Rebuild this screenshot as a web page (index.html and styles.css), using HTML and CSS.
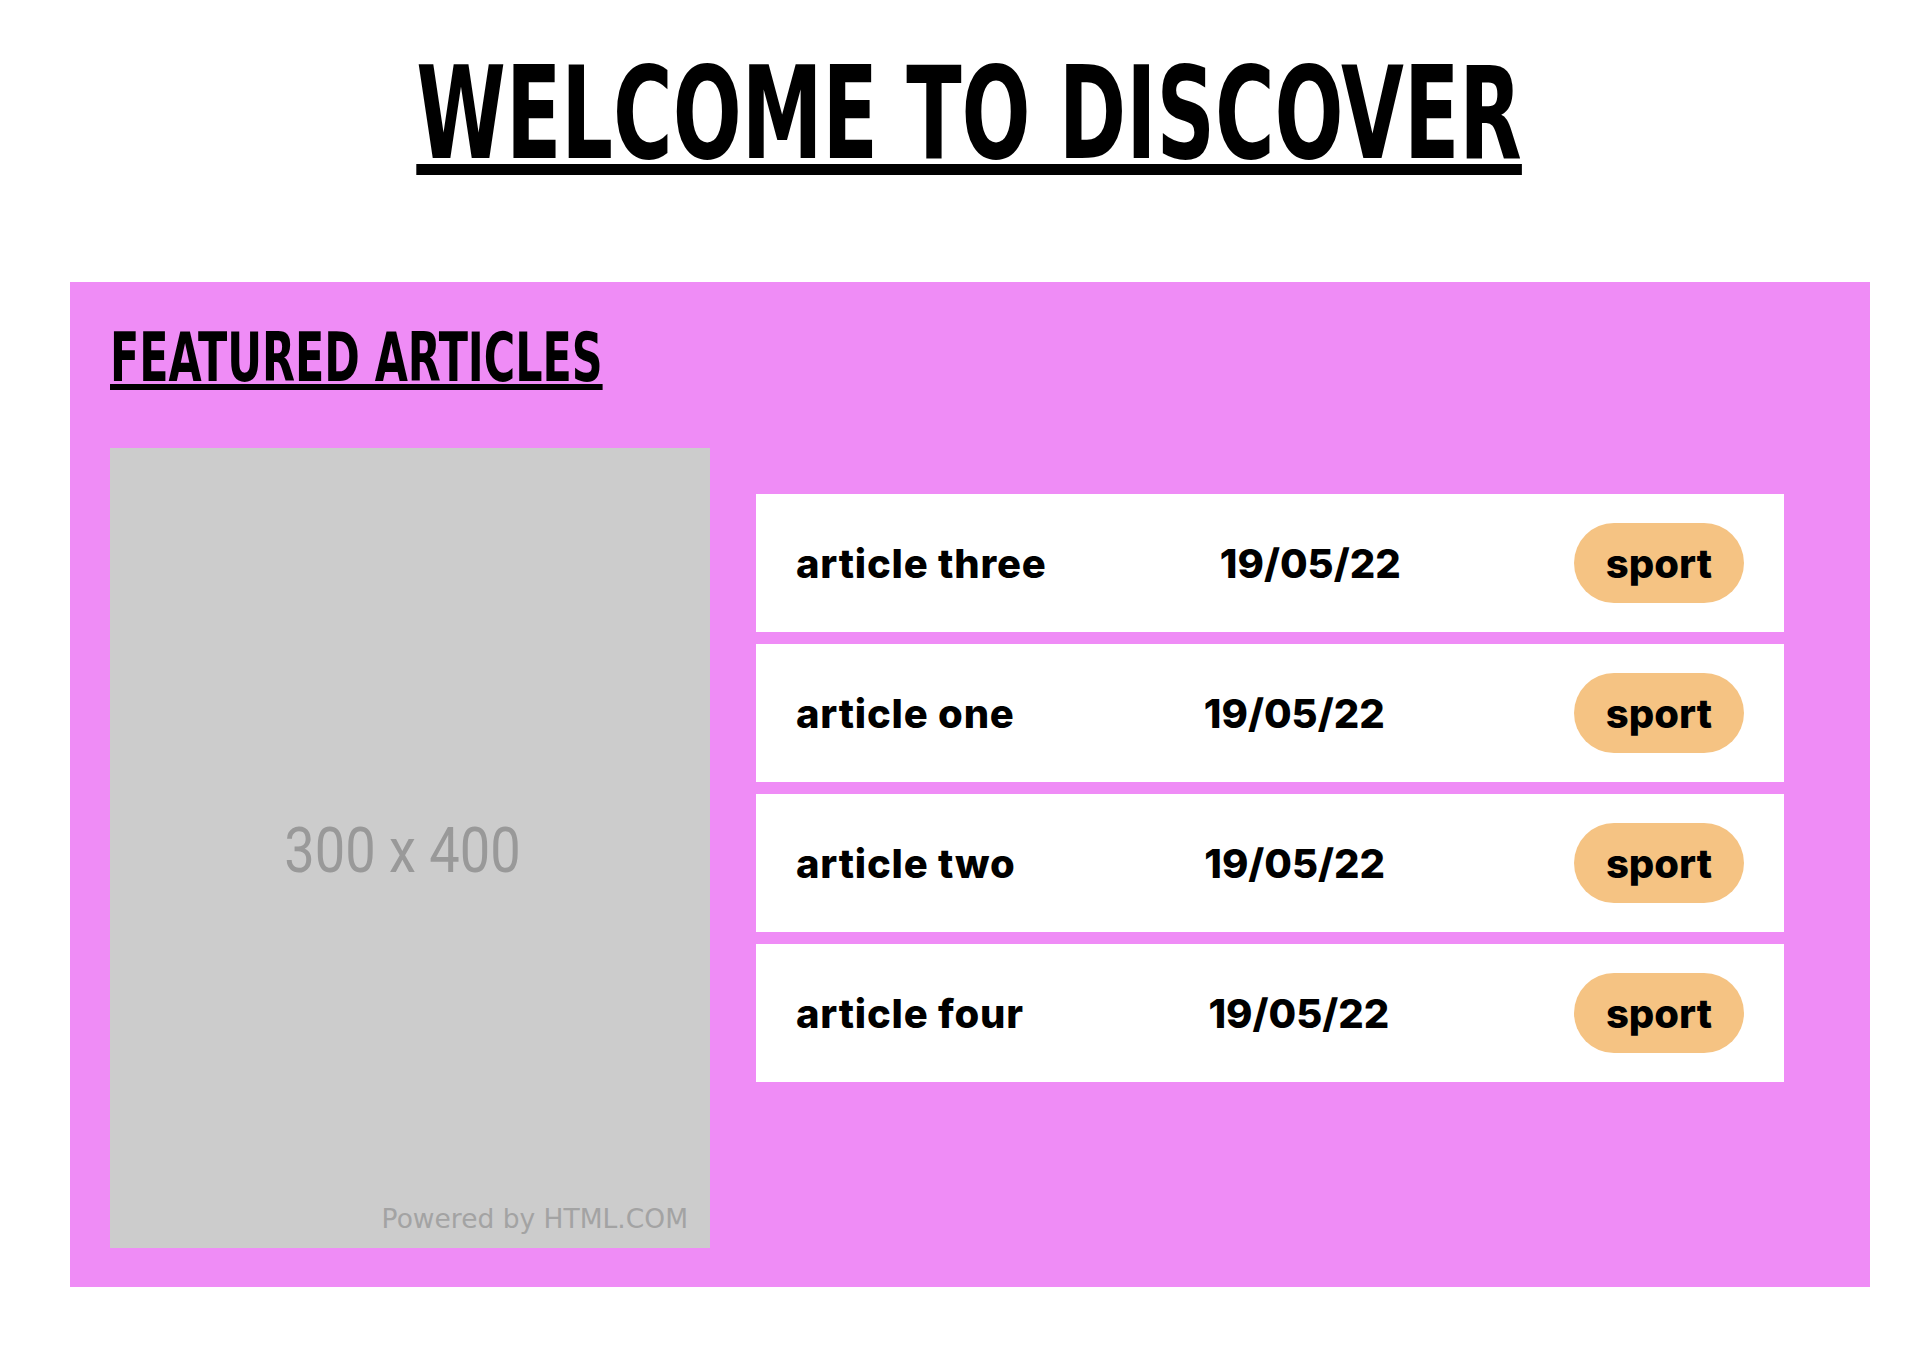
FILE: index.html
```html
<!DOCTYPE html>
<html lang="en">
<head>
<meta charset="utf-8">
<title>Discover</title>
<link rel="stylesheet" href="styles.css">
</head>
<body>
<header class="hero">
  <h1 class="hero-title"><span class="hero-text">WELCOME TO DISCOVER</span></h1>
</header>
<section class="featured">
  <h2 class="featured-title"><span class="featured-text">FEATURED ARTICLES</span></h2>
  <div class="featured-body">
    <div class="placeholder">
      <span class="ph-size">300 x 400</span>
      <span class="ph-credit">Powered by HTML.COM</span>
    </div>
    <ul class="article-list">
      <li class="article-card"><span class="article-name">article three</span><span class="article-date">19/05/22</span><span class="tag">sport</span></li>
      <li class="article-card"><span class="article-name">article one</span><span class="article-date">19/05/22</span><span class="tag">sport</span></li>
      <li class="article-card"><span class="article-name">article two</span><span class="article-date">19/05/22</span><span class="tag">sport</span></li>
      <li class="article-card"><span class="article-name">article four</span><span class="article-date">19/05/22</span><span class="tag">sport</span></li>
    </ul>
  </div>
</section>
</body>
</html>
```
FILE: styles.css
```css
* { box-sizing: border-box; }

body {
  margin: 0;
  background: #ffffff;
  color: #000000;
  font-family: "Liberation Sans", Arial, sans-serif;
}

.hero {
  padding: 50px 0 0 15px;
  text-align: center;
}

.hero-title {
  margin: 0;
  font-family: "DejaVu Sans", "Liberation Sans", sans-serif;
  font-stretch: condensed;
  font-weight: 700;
  font-size: 128px;
  line-height: 128px;
}

.hero-text {
  display: inline-block;
  transform: scaleX(0.705);
  text-decoration: underline;
  text-decoration-thickness: 11px;
  text-underline-offset: 6px;
}

.featured {
  margin: 104px 0 0 70px;
  width: 1800px;
  padding: 42px 40px 39px 40px;
  background: #ef8cf6;
}

.featured-title {
  margin: 0 0 56px 0;
  font-family: "DejaVu Sans", "Liberation Sans", sans-serif;
  font-stretch: condensed;
  font-weight: 700;
  font-size: 68px;
  line-height: 68px;
}

.featured-text {
  display: inline-block;
  transform: scaleX(0.70);
  transform-origin: left center;
  text-decoration: underline;
  text-decoration-thickness: 6px;
  text-underline-offset: 3px;
}

.featured-body {
  display: flex;
  align-items: flex-start;
}

.placeholder {
  position: relative;
  flex: 0 0 600px;
  height: 800px;
  background: #cccccc;
  display: flex;
  align-items: center;
  justify-content: center;
}

.ph-size {
  display: inline-block;
  font-family: Roboto, "Liberation Sans", sans-serif;
  font-size: 63px;
  line-height: 1;
  color: #999999;
  transform: scaleX(0.86);
  margin: 4px 16px 0 0;
}

.ph-credit {
  position: absolute;
  right: 22px;
  bottom: 16px;
  font-family: "DejaVu Sans", sans-serif;
  font-size: 26.5px;
  line-height: 26px;
  color: #a3a3a3;
}

.article-list {
  flex: 1;
  list-style: none;
  margin: 46px;
  padding: 0;
  display: flex;
  flex-direction: column;
  gap: 12px;
}

.article-card {
  height: 138px;
  padding: 0 40px;
  background: #ffffff;
  display: flex;
  align-items: center;
  justify-content: space-between;
  font-family: Inter, "Noto Sans", sans-serif;
  font-weight: 800;
  font-size: 40px;
}

.article-name {
  letter-spacing: 0.8px;
}

.tag {
  height: 80px;
  padding: 0 32px;
  border-radius: 40px;
  background: #f5c383;
  display: flex;
  align-items: center;
}
```
